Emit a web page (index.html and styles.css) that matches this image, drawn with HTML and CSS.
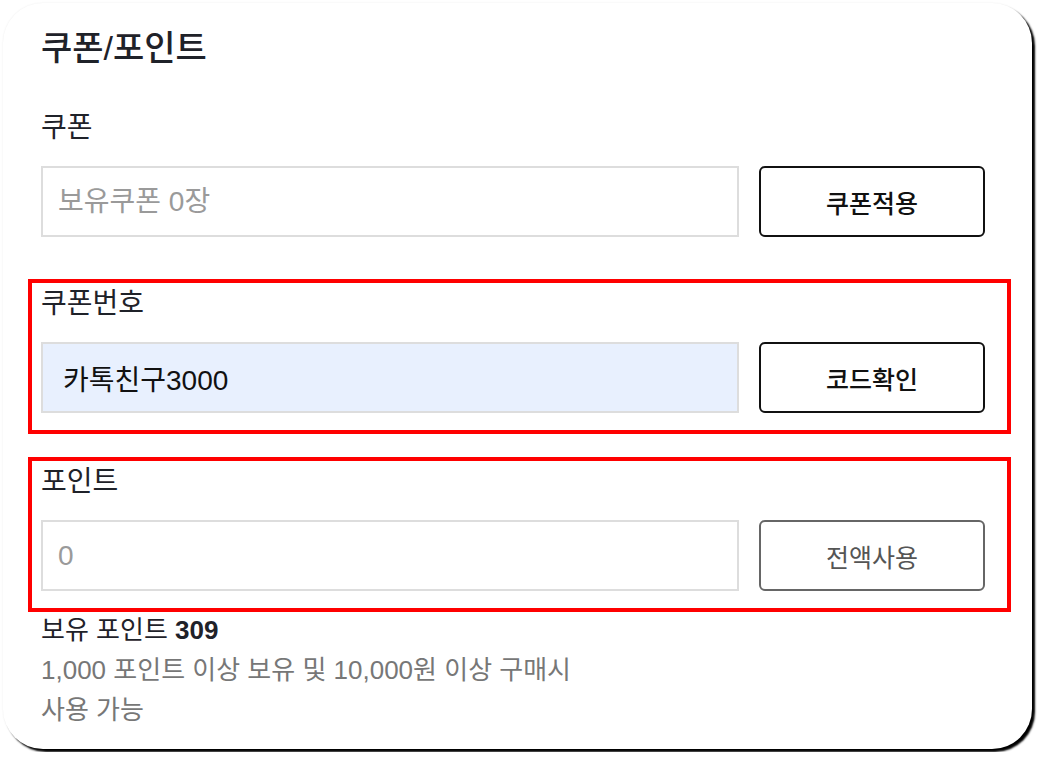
FILE: index.html
```html
<!DOCTYPE html>
<html lang="ko">
<head>
  <meta charset="UTF-8">
  <title>쿠폰/포인트</title>
  <link rel="stylesheet" href="styles.css">
</head>
<body>

  <div class="card">
    <h2 class="title">쿠폰/포인트</h2>

    <div class="group">
      <label class="group-label" for="coupon">쿠폰</label>
      <div class="row">
        <input type="text" id="coupon" class="field" placeholder="보유쿠폰 0장" readonly>
        <button class="btn">쿠폰적용</button>
      </div>
    </div>

    <div class="group marked">
      <label class="group-label" for="code">쿠폰번호</label>
      <div class="row">
        <input type="text" id="code" class="field filled" value="카톡친구3000">
        <button class="btn">코드확인</button>
      </div>
    </div>

    <div class="group marked last">
      <label class="group-label" for="point">포인트</label>
      <div class="row">
        <input type="text" id="point" class="field" placeholder="0">
        <button class="btn soft">전액사용</button>
      </div>
    </div>

    <div class="info">
      <p class="owned">보유 포인트 <strong>309</strong></p>
      <p class="note">1,000 포인트 이상 보유 및 10,000원 이상 구매시<br>사용 가능</p>
    </div>
  </div>

</body>
</html>
```

FILE: styles.css
```css
body {
  margin: 0;
  padding: 3px;
  background-color: #fff;
  font-family: "Liberation Sans", "Noto Sans CJK KR", sans-serif;
  color: #1f2229;
}
.card {
  width: 1029px;
  height: 746px;
  box-sizing: border-box;
  padding: 22px 47px 0 38px;
  background-color: #fff;
  border-radius: 40px;
  box-shadow: 3px 3px 2px #000, 0 0 2px rgba(0, 0, 0, 0.08);
}
.title {
  margin: 0 0 39px;
  font-size: 34px;
  line-height: 46px;
  font-weight: 500;
}
.group {
  margin-bottom: 49px;
}
.group.marked {
  margin: -7px -26px 30px -13px;
  padding: 3px 22px 17px 9px;
  border: 4px solid #ff0000;
}
.group.last {
  margin-bottom: -2px;
}
.group-label {
  display: block;
  font-size: 28px;
  line-height: 35px;
  margin-bottom: 21px;
}
.row {
  display: flex;
  gap: 20px;
}
.field {
  flex: 1;
  height: 71px;
  box-sizing: border-box;
  padding: 0 22px 0 15px;
  border: 2px solid #dddddd;
  border-radius: 0;
  font-family: inherit;
  font-size: 28px;
  color: #111;
  outline: none;
}
.field::placeholder {
  color: #9a9a9a;
}
.field.filled {
  background-color: #e8f0fe;
  padding-left: 20px;
}
.btn {
  width: 226px;
  height: 71px;
  border: 2px solid #111;
  border-radius: 6px;
  background-color: #fff;
  font-family: "Noto Sans CJK KR", sans-serif;
  font-size: 25px;
  font-weight: 500;
  color: #111;
  cursor: pointer;
}
.btn.soft {
  border-color: #666;
  color: #555;
  font-weight: 400;
}
.info p {
  margin: 0;
  font-size: 26px;
  line-height: 40px;
}
.info .note {
  color: #777;
}
```
